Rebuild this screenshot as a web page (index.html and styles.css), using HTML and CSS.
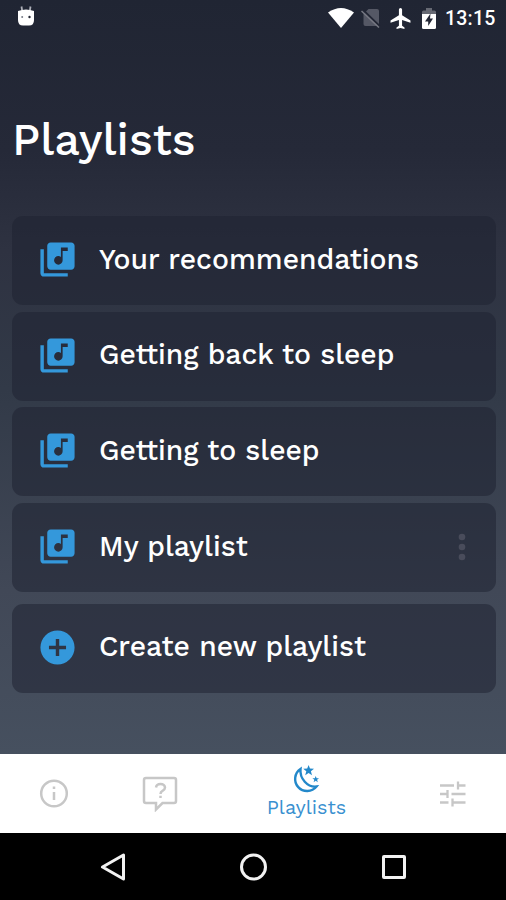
FILE: index.html
```html
<!DOCTYPE html>
<html lang="en">
<head>
<meta charset="utf-8">
<title>Playlists</title>
<link rel="stylesheet" href="styles.css">
</head>
<body>
<svg class="defs" width="0" height="0" aria-hidden="true">
  <symbol id="library" viewBox="0 0 24 24"><path d="M20 2H8c-1.100 0-2 .9-2 2v12c0 1.100.9 2 2 2h12c1.100 0 2-.9 2-2V4c0-1.100-.9-2-2-2zm-2 5h-3v5.500a2.500 2.500 0 1 1-2.500-2.500c.57 0 1.080.19 1.500.51V5h4v2zM4 6H2v14c0 1.100.9 2 2 2h14v-2H4V6z"/></symbol>
</svg>
<div class="phone">
  <header class="status">
    <svg class="robot" viewBox="0 0 20 22"><path d="M5.500 1.500l.6 4M14.500 1.500l-.6 4" stroke="#aeb0b9" stroke-width="1.800"/><path d="M2 6q8-3 16 0v9q0 5.500-5 5.500H7q-5 0-5-5.500z" fill="#fff"/><circle cx="6.200" cy="12" r="1" fill="#777b86"/><circle cx="13.500" cy="12" r="1.200" fill="#222634"/></svg>
    <div class="signals">
      <svg class="wifi" width="26" height="22" viewBox="0 0 26 22"><path d="M0 5.500Q13-3.500 26 5.500L13 21z" fill="#fff"/></svg>
      <svg class="sim" width="20" height="20" viewBox="0 0 20 20"><path d="M7.500 1H16q2 0 2 2v15H4.500q-2 0-2-2V6z" fill="#555865"/><path d="M1.500 1.500L18.500 18" stroke="#222634" stroke-width="2"/><path d="M.5 3L18 19.500" stroke="#777983" stroke-width="1.500"/></svg>
      <svg class="plane" viewBox="2 2 20 20"><path d="M21.500 16v-2l-8-5V3.500a1.500 1.500 0 0 0-3 0V9l-8 5v2l8-2.500V19l-2.300 1.500V22l3.800-1 3.800 1v-1.500L13.500 19v-5.500z" fill="#fff"/></svg>
      <svg class="battery" width="16" height="21" viewBox="0 0 16 21"><path d="M1 6V4q0-1.500 1.500-1.500H5V0h6v2.500h2.500Q15 2.500 15 4v2z" fill="#666973"/><path d="M1 6h14v13.500q0 1.500-1.500 1.500h-11Q1 21 1 19.500z" fill="#fff"/><path d="M9.500 5.500L4 13.500h3.200V18L12 10.500H9z" fill="#222634"/></svg>
      <span class="time">13:15</span>
    </div>
  </header>
  <main>
    <h1>Playlists</h1>
    <ul class="list">
      <li class="card"><svg class="icon"><use href="#library"/></svg><span>Your recommendations</span></li>
      <li class="card"><svg class="icon"><use href="#library"/></svg><span>Getting back to sleep</span></li>
      <li class="card"><svg class="icon"><use href="#library"/></svg><span>Getting to sleep</span></li>
      <li class="card"><svg class="icon"><use href="#library"/></svg><span>My playlist</span>
        <svg class="more" viewBox="0 0 8 28"><circle cx="4" cy="4" r="3.300"/><circle cx="4" cy="14" r="3.300"/><circle cx="4" cy="24" r="3.300"/></svg></li>
      <li class="card create"><svg class="icon" viewBox="0 0 24 24"><path d="M12 2a10 10 0 1 0 0 20 10 10 0 0 0 0-20zm5 11h-4v4h-2v-4H7v-2h4V7h2v4h4v2z"/></svg><span>Create new playlist</span></li>
    </ul>
  </main>
  <nav class="tabs">
    <div class="tab"><svg width="30" height="30" viewBox="0 0 30 30"><circle cx="15" cy="14.500" r="12.800"/><path d="M15 13v8M15 7.500V10"/></svg></div>
    <div class="tab"><svg class="help" width="36" height="36" viewBox="0 0 36 36"><path d="M4 2h28q2 0 2 2v21q0 2-2 2H20.500L14 33.500V27H4q-2 0-2-2V4q0-2 2-2z"/><path d="M14 11.500q.5-3.500 4.500-3.500T23 11.500q0 2-2.500 3.300Q18.500 15.800 18.500 18M18.500 19.800v2.300"/></svg></div>
    <div class="tab active">
      <svg width="30" height="30" viewBox="0 0 30 30"><path d="M8.500 4A12 12 0 1 0 24.500 21.500C15.500 22.500 7.500 13.500 8.500 4z"/><path class="star" d="M16.600 0l1.400 3.600 4 .2-3.100 2.500L20 10.200l-3.400-2.100-3.400 2.100 1.100-3.900-3.100-2.500 4-.2zM23.700 11l.9 2.200 2.400.1-1.900 1.500.7 2.400-2.100-1.400-2.100 1.400.7-2.400-1.900-1.500 2.400-.1z"/></svg>
      <span>Playlists</span>
    </div>
    <div class="tab"><svg class="tune" width="28" height="28" viewBox="0 0 28 28"><path d="M1 5.500h14M19 1.500v8M19 5.500h7.500M1 14h7.500M8.500 10v8M12.500 14h14M1 22.500h8.500M13.500 18.500v8M13.500 22.500h13"/></svg></div>
  </nav>
  <footer class="system">
    <svg viewBox="0 0 28 28"><path d="M24.500 2v24L3.500 14z"/></svg>
    <svg viewBox="0 0 28 28"><circle cx="14.500" cy="14" r="12"/></svg>
    <svg viewBox="0 0 28 28"><rect x="3.500" y="3.500" width="21" height="21" rx=".5"/></svg>
  </footer>
</div>
</body>
</html>
```
FILE: styles.css
```css
* { box-sizing: border-box; }
body { margin: 0; font-family: "Work Sans", Inter, sans-serif; }
.defs { display: block; position: absolute; }
.phone {
  width: 506px;
  height: 900px;
  display: flex;
  flex-direction: column;
  overflow: hidden;
  color: #fff;
  background: linear-gradient(#202533 0, #252938 150px, #2e3241 250px, #323a48 390px, #414857 590px, #46505f 754px);
}
.status {
  height: 36px;
  flex: none;
  display: flex;
  justify-content: space-between;
  padding: 0 11px 0 16px;
}
.robot { width: 20px; height: 22px; margin-top: 5px; }
.signals { display: flex; align-items: center; }
.signals svg { flex: none; }
.wifi { margin-right: 7px; margin-bottom: 1px; }
.sim { margin-right: 9px; }
.plane { width: 21px; height: 21px; margin-right: 10px; }
.battery { margin-right: 8px; }
.time { font: 500 19.500px Roboto, sans-serif; width: 50px; letter-spacing: .2px; white-space: nowrap; }
main { height: 718px; flex: none; padding: 80px 10.500px 0 12px; }
h1 { margin: 0 0 52px; padding-left: 0; font-size: 45px; line-height: 48px; font-weight: 500; }
.list { list-style: none; margin: 0; padding: 0; display: flex; flex-direction: column; gap: 6.700px; }
.card {
  height: 89px;
  display: flex;
  align-items: center;
  padding: 0 30px 1px 24.500px;
  border-radius: 11px;
  background: rgba(30, 34, 49, .53);
  font-size: 28.300px;
  line-height: 34px;
  font-weight: 500;
  white-space: nowrap;
}
.card span { padding-bottom: 1px; }
.card.create { margin-top: 5px; }
.icon { width: 41px; height: 41px; margin: 0 21.500px 1px 0; fill: #3498db; flex: none; }
.more { width: 8px; height: 28px; margin-left: auto; fill: #494c5b; }
.tabs { height: 79px; flex: none; background: #fff; display: grid; grid-template-columns: 107px 106px 187px 106px; }
.tab { display: flex; flex-direction: column; align-items: center; justify-content: center; }
.tab svg { fill: none; stroke: #c7c7c7; stroke-width: 2.500; }
.tab .tune { stroke-width: 2.300; }
.tab.active { color: #3990d0; font-size: 19.800px; line-height: 24px; justify-content: flex-start; padding-top: 11px; }
.tab.active span { padding-top: 1px; }
.tab.active svg { stroke: #2388ca; stroke-width: 2.400; }
.tab .star { fill: #2388ca; stroke: none; }
.system { height: 67px; flex: none; background: #000; display: flex; justify-content: center; gap: 112.500px; padding-top: 20px; }
.system svg { width: 28px; height: 28px; fill: none; stroke: #f2f2f2; stroke-width: 3; stroke-linejoin: round; }
```
